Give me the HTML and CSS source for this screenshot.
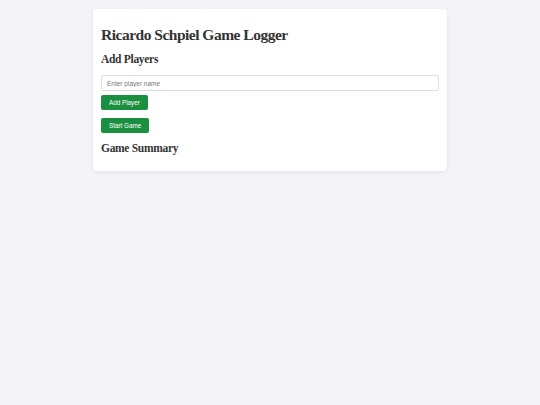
FILE: index.html
```html
<!DOCTYPE html>
<html lang="en">
<head>
    <meta charset="UTF-8">
    <meta name="viewport" content="width=device-width, initial-scale=1.0">
    <title>Ricardo Schpiel Game Logger</title>
    <link rel="stylesheet" href="styles.css">
</head>
<body>
    <div class="container">
        <h1>Ricardo Schpiel Game Logger</h1>

        <div class="players-section">
            <h2>Add Players</h2>
            <input type="text" id="playerName" placeholder="Enter player name">
            <button id="addPlayer">Add Player</button>
            <ul class="player-list" id="playerList"></ul>
        </div>

        <button id="startGame">Start Game</button>

        <div class="summary-section">
            <h2>Game Summary</h2>
            <div id="summary"></div>
        </div>
    </div>
</body>
</html>
```

FILE: styles.css
```css
body {
    font-family: "Liberation Sans", Arial, sans-serif;
    margin: 0;
    padding: 9px 0;
    background-color: #f4f4f8;
    color: #333;
}
.container {
    width: 338px;
    margin: 0 auto;
    background-color: #fff;
    padding: 8px 8px 11px;
    border-radius: 4px;
    box-shadow: 0 1px 4px rgba(0, 0, 0, 0.08);
}
h1, h2 {
    font-family: "Liberation Serif", "DejaVu Serif", serif;
    font-weight: bold;
    color: #333;
}
h1 {
    font-size: 15.5px;
    letter-spacing: -0.5px;
    margin: 9px 0 9px;
}
h2 {
    font-size: 11.5px;
    letter-spacing: -0.3px;
    margin: 0 0 10px;
}
input[type="text"] {
    display: block;
    box-sizing: border-box;
    width: 100%;
    height: 16px;
    padding: 0 5px;
    font-family: "Liberation Sans", Arial, sans-serif;
    font-size: 6.5px;
    border: 1px solid #ddd;
    border-radius: 2px;
    margin-bottom: 4px;
}
input::placeholder {
    color: #777;
}
button {
    display: block;
    box-sizing: border-box;
    height: 15px;
    padding: 0 8px;
    font-family: "Liberation Sans", Arial, sans-serif;
    font-size: 6.3px;
    color: #fff;
    background-color: #1a8f3f;
    border: none;
    border-radius: 2px;
}
.player-list {
    list-style: none;
    padding: 0;
    margin: 0 0 8px;
}
.summary-section {
    margin-top: 9px;
}
.summary-section h2 {
    margin-bottom: 6px;
}
```
